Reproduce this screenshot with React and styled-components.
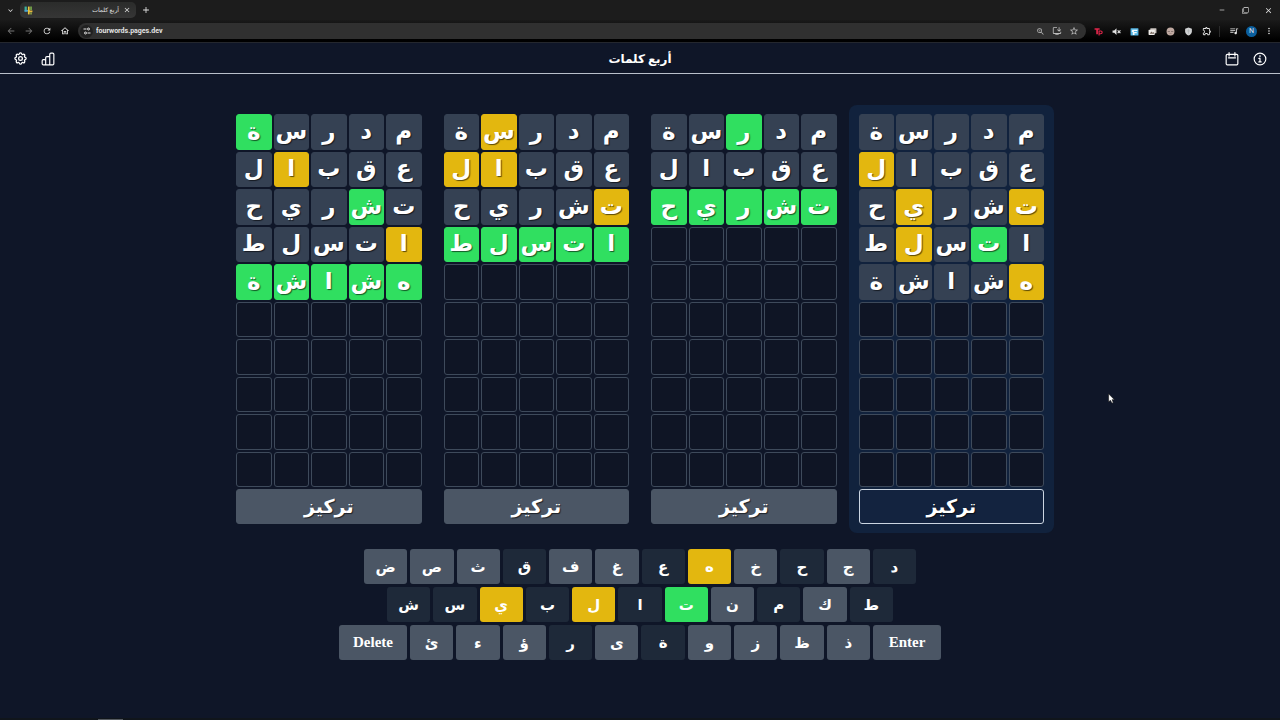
import styled, { createGlobalStyle, css } from "styled-components";
import {
  MdArrowBack,
  MdArrowForward,
  MdClose,
  MdExpandMore,
  MdAdd,
  MdRefresh,
  MdOutlineHome,
  MdTune,
  MdZoomIn,
  MdOutlineInstallDesktop,
  MdStarBorder,
  MdVolumeOff,
  MdOutlineExtension,
  MdQueueMusic,
  MdMoreVert,
  MdRemove,
  MdFilterNone,
} from "react-icons/md";
import { TbSettings } from "react-icons/tb";

const COLORS = {
  correct: "#30df60",
  misplaced: "#e3b70f",
  absent: "#354153",
  key: "#4b5665",
  usedKey: "#1e2939",
};

const WORDS = ["مدرسة", "عقبال", "تشريح", "اتسلط", "هشاشة"];
const ROW_COUNT = 10;

// g = right place, y = wrong place, . = not in the word
const BOARDS = [
  { id: 1, marks: ["....g", "...y.", ".g...", "y....", "ggggg"] },
  { id: 2, marks: ["...y.", "...yy", "y....", "ggggg"] },
  { id: 3, marks: ["..g..", ".....", "ggggg"] },
  { id: 4, marks: [".....", "....y", "y..y.", ".g.y.", "y...."], focused: true },
];

const MARK_STATUS = { g: "correct", y: "misplaced", ".": "absent" };

const KEY_ROWS = [
  { inset: 25, keys: ["ض", "ص", "ث", "ق", "ف", "غ", "ع", "ه", "خ", "ح", "ج", "د"] },
  { inset: 48, keys: ["ش", "س", "ي", "ب", "ل", "ا", "ت", "ن", "م", "ك", "ط"] },
  {
    inset: 0,
    keys: ["Delete", "ئ", "ء", "ؤ", "ر", "ى", "ة", "و", "ز", "ظ", "ذ", "Enter"],
  },
];

const KEY_STATUS = {
  ه: "misplaced",
  ي: "misplaced",
  ل: "misplaced",
  ت: "correct",
};
const USED_KEYS = "قعحدشسباطمرة";

const keyStatus = (key) => {
  if (KEY_STATUS[key]) return KEY_STATUS[key];
  return USED_KEYS.includes(key) ? "usedKey" : "key";
};

const Browser = () => (
  <BrowserFrame>
    <TabStrip>
      <ChromeButton aria-label="Search tabs">
        <MdExpandMore size={9} />
      </ChromeButton>
      <Tab>
        <Favicon viewBox="0 0 16 16">
          <path d="M1 1h4v9H1z" fill="#3fae9b" />
          <path d="M1 7h9v3H1z" fill="#4a9fd0" />
          <path d="M7 1h3v14H7z" fill="#e8c93c" />
          <path d="M11 1h3v6h-3z" fill="#79a94b" />
          <path d="M8 8h7v3H8z" fill="#e8b93c" />
          <path d="M11 11h3v4h-3z" fill="#8e9f45" />
        </Favicon>
        <TabTitle>أربع كلمات</TabTitle>
        <ChromeButton aria-label="Close tab">
          <MdClose size={8} />
        </ChromeButton>
      </Tab>
      <ChromeButton aria-label="New tab">
        <MdAdd size={10} />
      </ChromeButton>
      <WindowButtons>
        <ChromeButton aria-label="Minimize">
          <MdRemove size={8} />
        </ChromeButton>
        <ChromeButton aria-label="Restore">
          <MdFilterNone size={7} />
        </ChromeButton>
        <ChromeButton aria-label="Close">
          <MdClose size={9} />
        </ChromeButton>
      </WindowButtons>
    </TabStrip>
    <Toolbar>
      <NavButtons>
        <ChromeButton aria-label="Back" disabled>
          <MdArrowBack size={10} />
        </ChromeButton>
        <ChromeButton aria-label="Forward" disabled>
          <MdArrowForward size={10} />
        </ChromeButton>
        <ChromeButton aria-label="Reload">
          <MdRefresh size={10} />
        </ChromeButton>
        <ChromeButton aria-label="Home">
          <MdOutlineHome size={10} />
        </ChromeButton>
      </NavButtons>
      <AddressBar>
        <SiteInfo aria-label="Site information">
          <TuneIcon viewBox="0 0 16 16">
            <path d="M1 4h6M9 12h6" />
            <circle cx="11" cy="4" r="2" />
            <circle cx="5" cy="12" r="2" />
          </TuneIcon>
        </SiteInfo>
        <Address aria-label="Address" defaultValue="fourwords.pages.dev" />
        <AddressActions>
          <MdZoomIn size={9} />
          <MdOutlineInstallDesktop size={10} />
          <MdStarBorder size={10} />
        </AddressActions>
      </AddressBar>
      <Extensions>
        <ExtensionIcon viewBox="0 0 16 16">
          <path d="M1 2h9v3H7v8H4V5H1z" fill="#e3264b" />
          <path
            d="M9 15V7h3a2 2 0 0 1 0 5H9"
            fill="none"
            stroke="#e3264b"
            strokeWidth="2"
          />
        </ExtensionIcon>
        <ExtensionIcon viewBox="0 0 16 16">
          <path d="M1 6h3l4-4v12l-4-4H1z" fill="#e3e3e3" />
          <path d="M10 6l5 5M15 6l-5 5" stroke="#e3e3e3" strokeWidth="2" />
        </ExtensionIcon>
        <ExtensionIcon viewBox="0 0 16 16">
          <rect x="1" y="2" width="14" height="13" rx="1" fill="#55b7e6" />
          <path d="M4 5h9v2H7v2h5v2H8v3H5V9H3z" fill="#f4fbff" />
        </ExtensionIcon>
        <ExtensionIcon viewBox="0 0 16 16">
          <rect x="4" y="2" width="11" height="9" rx="1" fill="#c8c2bd" />
          <rect x="1" y="5" width="11" height="9" rx="1" fill="#efece9" />
          <path d="M3 12l3-4 2 2 2-1 1 3z" fill="#75665c" />
        </ExtensionIcon>
        <ExtensionIcon viewBox="0 0 16 16">
          <circle cx="8" cy="8" r="7" fill="#c0aaa2" />
          <path d="M3 7h4v2H3zM9 7h4v2H9zM6 11h4v1H6z" fill="#8b7974" />
        </ExtensionIcon>
        <ExtensionIcon viewBox="0 0 16 16">
          <path d="M8 1l6 2v5c0 4-3 6-6 7-3-1-6-3-6-7V3z" fill="#d0d2d3" />
          <path d="M8 4v8M5 7h6" stroke="#a8abad" strokeWidth="1" />
        </ExtensionIcon>
        <MdOutlineExtension size={10} />
      </Extensions>
      <ProfileArea>
        <MdQueueMusic size={10} />
        <Avatar aria-label="Profile">N</Avatar>
        <MdMoreVert size={10} />
      </ProfileArea>
    </Toolbar>
  </BrowserFrame>
);

const Header = () => (
  <HeaderBar>
    <HeaderGroup>
      <IconButton aria-label="الإعدادات">
        <TbSettings size={15} />
      </IconButton>
      <IconButton aria-label="الإحصائيات">
        <HeaderIcon viewBox="0 0 24 24">
          <path d="M8 22V15a2 2 0 0 0-2-2H4a2 2 0 0 0-2 2v5a2 2 0 0 0 2 2h16a2 2 0 0 0 2-2V4a2 2 0 0 0-2-2h-3a2 2 0 0 0-2 2v18M15 8h-5a2 2 0 0 0-2 2v5" />
        </HeaderIcon>
      </IconButton>
    </HeaderGroup>
    <Title>أربع كلمات</Title>
    <HeaderGroup>
      <IconButton aria-label="التقويم">
        <HeaderIcon viewBox="0 0 24 24">
          <path d="M4 4h16a2 2 0 0 1 2 2v14a2 2 0 0 1-2 2H4a2 2 0 0 1-2-2V6a2 2 0 0 1 2-2zM7 1v6M17 1v6M6 10h12" />
        </HeaderIcon>
      </IconButton>
      <IconButton aria-label="معلومات">
        <HeaderIcon viewBox="0 0 24 24">
          <circle cx="12" cy="12" r="10" />
          <path d="M12 6v2M10 11h2v6M10 17h4" />
        </HeaderIcon>
      </IconButton>
    </HeaderGroup>
  </HeaderBar>
);

const Board = ({ marks, focused }) => (
  <BoardPanel $focused={focused}>
    <Grid>
      {Array.from({ length: ROW_COUNT }, (_, row) =>
        Array.from({ length: 5 }, (_, col) => (
          <Cell
            key={`${row}-${col}`}
            $status={marks[row] && MARK_STATUS[marks[row][col]]}
          >
            {marks[row] && WORDS[row][col]}
          </Cell>
        ))
      )}
    </Grid>
    <FocusButton $focused={focused}>تركيز</FocusButton>
  </BoardPanel>
);

const App = () => {
  return (
    <Page>
      <GlobalStyle />
      <Browser />
      <Header />
      <Main>
        <Boards>
          {BOARDS.map((board) => (
            <Board key={board.id} marks={board.marks} focused={board.focused} />
          ))}
        </Boards>
        <Keyboard>
          {KEY_ROWS.map(({ inset, keys }) => (
            <KeyRow key={inset} $inset={inset}>
              {keys.map((key) => (
                <Key key={key} $status={keyStatus(key)} $wide={key.length > 1}>
                  {key}
                </Key>
              ))}
            </KeyRow>
          ))}
        </Keyboard>
      </Main>
      <Taskbar>
        <ActiveApp />
      </Taskbar>
      <Pointer viewBox="0 0 12 18">
        <path d="M1 1v14l3-3 3 5 2-1-2-5h4z" />
      </Pointer>
    </Page>
  );
};

const GlobalStyle = createGlobalStyle`
  * {
    box-sizing: border-box;
  }
  body {
    margin: 0;
    background: #0f1628;
    color: #fff;
    font-family: "Liberation Serif", "DejaVu Sans", serif;
  }
  button,
  input {
    margin: 0;
    padding: 0;
    border: none;
    background: none;
    color: inherit;
    font-family: inherit;
  }
`;

const Page = styled.div`
  position: relative;
  min-height: 100vh;
  display: flex;
  flex-direction: column;
`;

const BrowserFrame = styled.div`
  color: #e3e3e3;
  font-family: Roboto, "DejaVu Sans", sans-serif;
`;

const TabStrip = styled.div`
  height: 20px;
  display: flex;
  align-items: center;
  gap: 4px;
  padding: 0 6px 0 4px;
  background: #1c1c1c;
`;

const Tab = styled.div`
  width: 116px;
  height: 16px;
  display: flex;
  align-items: center;
  gap: 2px;
  padding: 0 3px 0 4px;
  border-radius: 5px;
  background: linear-gradient(#2b2c2b, #363636);
`;

const Favicon = styled.svg`
  width: 9px;
  height: 9px;
`;

const TabTitle = styled.span`
  flex: 1;
  direction: rtl;
  font-size: 6px;
  font-weight: 500;
  line-height: 12px;
  white-space: nowrap;
`;

const ChromeButton = styled.button`
  width: 12px;
  height: 12px;
  display: flex;
  align-items: center;
  justify-content: center;

  &:disabled {
    color: #777;
  }
`;

const WindowButtons = styled.div`
  margin-left: auto;
  display: flex;
  gap: 11px;
`;

const Toolbar = styled.div`
  height: 23px;
  display: flex;
  align-items: center;
  padding: 0 6px 0 5px;
  background: linear-gradient(#1a1a1a, #000 90%);
  border-bottom: 1px solid #24272e;
`;

const NavButtons = styled.div`
  display: flex;
  gap: 6px;
  margin-right: 7px;
`;

const AddressBar = styled.div`
  flex: 1;
  height: 16px;
  display: flex;
  align-items: center;
  padding: 0 7px 0 2px;
  border-radius: 8px;
  background: #303030;
`;

const SiteInfo = styled.button`
  && {
    width: 13px;
    height: 13px;
    display: flex;
    align-items: center;
    justify-content: center;
    border-radius: 50%;
    background: #202020;
  }
`;

const TuneIcon = styled.svg`
  width: 8px;
  height: 8px;
  fill: none;
  stroke: currentColor;
  stroke-width: 2;
`;

const Address = styled.input`
  && {
    flex: 1;
    margin-left: 3px;
    font-size: 7px;
    font-weight: 700;
    line-height: 12px;
    outline: none;
  }
`;

const AddressActions = styled.div`
  display: flex;
  align-items: center;
  gap: 7px;
  color: #bdbdbd;
`;

const Extensions = styled.div`
  display: flex;
  align-items: center;
  gap: 9px;
  padding: 0 7px 0 8px;
`;

const ExtensionIcon = styled.svg`
  width: 9px;
  height: 9px;
`;

const ProfileArea = styled.div`
  display: flex;
  align-items: center;
  gap: 7px;
  padding-left: 9px;
  border-left: 1px solid #2b2b2b;
`;

const Avatar = styled.button`
  && {
    width: 11px;
    height: 11px;
    border-radius: 50%;
    background: #0b5f9e;
    font-size: 7px;
    line-height: 11px;
  }
`;

const HeaderBar = styled.header`
  display: flex;
  align-items: center;
  justify-content: space-between;
  height: 31px;
  padding: 1px 12px 0;
  border-bottom: 1px solid #b9c0cb;
`;

const HeaderGroup = styled.div`
  display: flex;
  gap: 12px;
`;

const IconButton = styled.button`
  width: 16px;
  height: 16px;
  display: flex;
  align-items: center;
  justify-content: center;
  cursor: pointer;
`;

const HeaderIcon = styled.svg`
  width: 14px;
  height: 14px;
  fill: none;
  stroke: currentColor;
  stroke-width: 2;
  stroke-linecap: round;
  stroke-linejoin: round;
`;

const Title = styled.h1`
  margin: 0;
  direction: rtl;
  font-size: 12px;
  line-height: 20px;
`;

const Main = styled.main`
  flex: 1;
  display: flex;
  flex-direction: column;
  align-items: center;
  gap: 16px;
  padding-top: 31px;
`;

const Boards = styled.div`
  width: 100%;
  max-width: 828px;
  display: grid;
  grid-template-columns: repeat(4, 1fr);
  gap: 2px;
`;

const BoardPanel = styled.section`
  display: flex;
  flex-direction: column;
  gap: 2px;
  padding: 9px 10px;
  border-radius: 8px;
  background: ${({ $focused }) => ($focused ? "#11223d" : "transparent")};
`;

const Grid = styled.div`
  direction: rtl;
  display: grid;
  grid-template-columns: repeat(5, 1fr);
  gap: 2px;
`;

const Cell = styled.div`
  aspect-ratio: 1;
  min-width: 0;
  min-height: 0;
  display: flex;
  align-items: center;
  justify-content: center;
  border: 1px solid #3e4a5b;
  border-radius: 3px;
  background: #0f1525;
  font-size: 23px;
  font-weight: 700;
  line-height: 32px;
  text-shadow: 1px 1px 1px rgba(0, 0, 0, 0.6);

  ${({ $status }) =>
    $status &&
    css`
      border-color: ${COLORS[$status]};
      background: ${COLORS[$status]};
    `}
`;

const FocusButton = styled.button`
  && {
    height: 35px;
    border: 1px solid ${({ $focused }) => ($focused ? "#cbd5e1" : COLORS.key)};
    border-radius: 3px;
    background: ${({ $focused }) => ($focused ? "#13233f" : COLORS.key)};
    font-size: 19px;
    font-weight: 700;
    line-height: 32px;
    text-shadow: 1px 1px 1px rgba(0, 0, 0, 0.6);
    cursor: pointer;
  }
`;

const Keyboard = styled.div`
  width: 100%;
  max-width: 602px;
  display: flex;
  flex-direction: column;
  gap: 3px;
`;

const KeyRow = styled.div`
  display: flex;
  gap: 3px;
  padding: 0 ${({ $inset }) => $inset}px;
`;

const Key = styled.button`
  flex: ${({ $wide }) => ($wide ? "0 0 68px" : "1 1 0")};
  min-width: 0;
  height: 35px;
  border-radius: 3px;
  background: ${({ $status }) => COLORS[$status]};
  font-size: 15px;
  font-weight: 700;
  cursor: pointer;
`;

const Taskbar = styled.div`
  height: 2px;
  display: flex;
  align-items: flex-end;
  padding-left: 98px;
  background: #10151b;
`;

const ActiveApp = styled.div`
  width: 25px;
  height: 1px;
  background: #555a60;
`;

const Pointer = styled.svg`
  position: absolute;
  left: 1108px;
  top: 393px;
  width: 7px;
  height: 11px;
  fill: #fff;
  stroke: #111;
`;

export default App;
